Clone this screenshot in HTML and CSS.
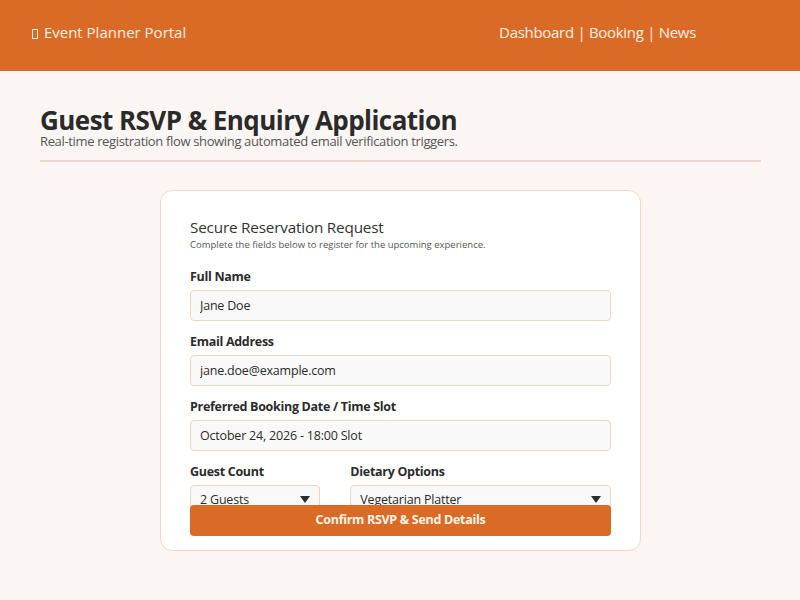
FILE: index.html
```html
<!DOCTYPE html>
<html lang="en">
<head>
<meta charset="utf-8">
<title>Event Planner Portal</title>
<link rel="stylesheet" href="styles.css">
</head>
<body>
<header class="topbar">
  <div class="brand"><span class="tofu"></span> Event Planner Portal</div>
  <nav class="nav">Dashboard | Booking | News</nav>
</header>
<main class="main">
  <section class="intro">
    <h1 class="title">Guest RSVP &amp; Enquiry Application</h1>
    <p class="subtitle">Real-time registration flow showing automated email verification triggers.</p>
  </section>
  <form class="card">
    <h2 class="card-title">Secure Reservation Request</h2>
    <p class="card-sub">Complete the fields below to register for the upcoming experience.</p>
    <div class="fields">
      <div class="group">
        <label class="label">Full Name</label>
        <input class="input" type="text" value="Jane Doe">
      </div>
      <div class="group">
        <label class="label">Email Address</label>
        <input class="input" type="text" value="jane.doe@example.com">
      </div>
      <div class="group">
        <label class="label">Preferred Booking Date / Time Slot</label>
        <input class="input" type="text" value="October 24, 2026 - 18:00 Slot">
      </div>
      <div class="row">
        <div class="group">
          <label class="label">Guest Count</label>
          <div class="select"><span>2 Guests</span><span class="caret"></span></div>
        </div>
        <div class="group">
          <label class="label">Dietary Options</label>
          <div class="select"><span>Vegetarian Platter</span><span class="caret"></span></div>
        </div>
      </div>
    </div>
    <button class="btn" type="button">Confirm RSVP &amp; Send Details</button>
  </form>
</main>
</body>
</html>
```
FILE: styles.css
```css
* { box-sizing: border-box; }
body {
  margin: 0;
  background: #fbf6f3;
  font-family: "Open Sans", "Noto Sans", sans-serif;
  color: #2b2b2b;
}
.topbar {
  height: 71px;
  background: #da6b27;
  color: #fdf0e6;
  display: flex;
  align-items: center;
  justify-content: space-between;
  padding: 0 104px 8px 31px;
  font-size: 15px;
}
.brand { letter-spacing: 0; }
.nav { letter-spacing: -0.3px; }
.tofu {
  display: inline-block;
  width: 6px;
  height: 10px;
  border: 1px solid #fdf0e6;
  vertical-align: -1px;
  margin-left: 1px;
  margin-right: 2px;
}
.main {
  padding: 36px 39px 0 40px;
}
.intro {
  padding-bottom: 10.5px;
  border-bottom: 2px solid #ead9ca;
}
.title {
  margin: 0;
  font-size: 26px;
  line-height: 26px;
  font-weight: 700;
  letter-spacing: -0.55px;
  color: #2a2a2a;
}
.subtitle {
  margin: 1px 0 0;
  font-size: 13px;
  line-height: 15.6px;
  letter-spacing: -0.35px;
  color: #555;
}
.card {
  width: 481px;
  height: 361px;
  margin: 28px auto 0;
  background: #fff;
  border: 1px solid #f0dac7;
  border-radius: 12px;
  padding: 25px 29px 14px;
  display: flex;
  flex-direction: column;
}
.card-title {
  margin: 0;
  font-size: 15.3px;
  line-height: 22px;
  font-weight: 400;
  color: #333;
  letter-spacing: -0.2px;
}
.card-sub {
  margin: 0 0 17px;
  font-size: 9.5px;
  line-height: 13px;
  color: #555;
  letter-spacing: 0;
}
.fields {
  flex: 1;
  min-height: 0;
  display: flex;
  flex-direction: column;
  gap: 12px;
}
.group {
  display: flex;
  flex-direction: column;
}
.label {
  font-size: 12.5px;
  line-height: 18px;
  font-weight: 700;
  color: #2b2b2b;
  letter-spacing: -0.3px;
  margin-bottom: 4px;
}
.input, .select {
  height: 31px;
  width: 100%;
  background: #f9f9f9;
  border: 1px solid #ecd7c5;
  border-radius: 4px;
  padding: 0 9px;
  font-family: inherit;
  font-size: 12.5px;
  letter-spacing: -0.2px;
  color: #2b2b2b;
  outline: none;
}
.row {
  display: grid;
  grid-template-columns: 1fr 2fr;
  gap: 30px;
}
.select {
  display: flex;
  align-items: center;
  justify-content: space-between;
  padding-bottom: 2px;
}
.caret {
  width: 0;
  height: 0;
  border-left: 5px solid transparent;
  border-right: 5px solid transparent;
  border-top: 7px solid #2b2b2b;
}
.btn {
  position: relative;
  z-index: 1;
  height: 31px;
  width: 100%;
  border: none;
  border-radius: 4px;
  background: #da6b27;
  color: #fdf3ec;
  font-family: inherit;
  font-size: 12.5px;
  font-weight: 700;
  letter-spacing: -0.3px;
  padding: 0 0 2px;
}
```
